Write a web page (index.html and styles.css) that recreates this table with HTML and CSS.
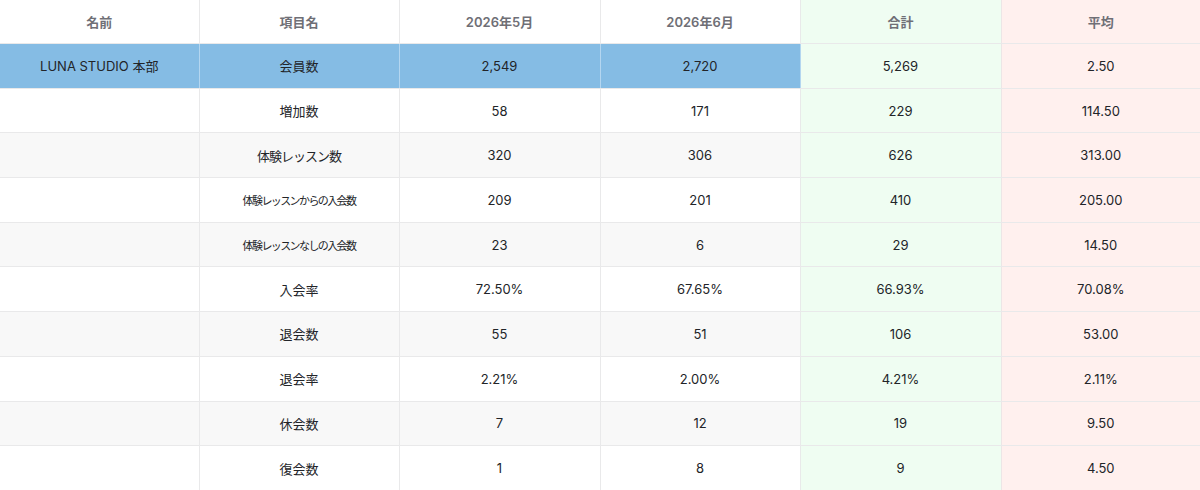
FILE: index.html
```html
<!DOCTYPE html>
<html lang="ja">
<head>
<meta charset="utf-8">
<link rel="stylesheet" href="styles.css">
</head>
<body>
<table class="report">
  <colgroup>
    <col class="c1"><col class="c2"><col class="c3"><col class="c4"><col class="c5"><col class="c6">
  </colgroup>
  <thead>
    <tr>
      <th>名前</th><th>項目名</th><th>2026年5月</th><th>2026年6月</th><th class="sum">合計</th><th class="avg">平均</th>
    </tr>
  </thead>
  <tbody>
    <tr class="hl"><td>LUNA STUDIO 本部</td><td>会員数</td><td>2,549</td><td>2,720</td><td class="sum">5,269</td><td class="avg">2.50</td></tr>
    <tr><td></td><td>増加数</td><td>58</td><td>171</td><td class="sum">229</td><td class="avg">114.50</td></tr>
    <tr class="odd"><td></td><td class="kata">体験レッスン数</td><td>320</td><td>306</td><td class="sum">626</td><td class="avg">313.00</td></tr>
    <tr><td></td><td class="small">体験レッスンからの入会数</td><td>209</td><td>201</td><td class="sum">410</td><td class="avg">205.00</td></tr>
    <tr class="odd"><td></td><td class="small">体験レッスンなしの入会数</td><td>23</td><td>6</td><td class="sum">29</td><td class="avg">14.50</td></tr>
    <tr><td></td><td>入会率</td><td>72.50%</td><td>67.65%</td><td class="sum">66.93%</td><td class="avg">70.08%</td></tr>
    <tr class="odd"><td></td><td>退会数</td><td>55</td><td>51</td><td class="sum">106</td><td class="avg">53.00</td></tr>
    <tr><td></td><td>退会率</td><td>2.21%</td><td>2.00%</td><td class="sum">4.21%</td><td class="avg">2.11%</td></tr>
    <tr class="odd"><td></td><td>休会数</td><td>7</td><td>12</td><td class="sum">19</td><td class="avg">9.50</td></tr>
    <tr><td></td><td>復会数</td><td>1</td><td>8</td><td class="sum">9</td><td class="avg">4.50</td></tr>
  </tbody>
</table>
</body>
</html>
```
FILE: styles.css
```css
html, body {
  margin: 0;
  padding: 0;
  background: #ffffff;
}
body {
  font-family: Inter, "Noto Sans CJK JP", sans-serif;
  color: #222428;
}
.report {
  width: 1200px;
  border-collapse: collapse;
  table-layout: fixed;
}
.report .c1 { width: 199px; }
.report .c2 { width: 200px; }
.report .c3 { width: 201px; }
.report .c4 { width: 200px; }
.report .c5 { width: 201px; }
.report .c6 { width: 199px; }
.report th,
.report td {
  border: 1px solid #e9e9ea;
  text-align: center;
  vertical-align: middle;
  padding: 0;
  font-size: 13px;
}
.report tr > :first-child {
  border-left: none;
}
.report tr > :last-child {
  border-right: none;
}
.report thead tr > * {
  border-top: none;
}
.report th {
  height: 43px;
  font-weight: 600;
  color: #6f6f76;
  background: #ffffff;
}
.report tbody tr {
  height: 44.7px;
}
.report tbody tr:last-child td {
  border-bottom: none;
}
.report tbody tr.odd td {
  background: #f8f8f8;
}
.report tbody tr.hl td {
  background: #85bce4;
  border-left-color: #b4d6f0;
  border-right-color: #b4d6f0;
}
.report .sum,
.report tbody tr.odd td.sum,
.report tbody tr.hl td.sum {
  background: #effdf2;
  border-left-color: #e4ece6;
  border-right-color: #ece6e6;
}
.report .avg,
.report tbody tr.odd td.avg,
.report tbody tr.hl td.avg {
  background: #fff0ee;
}
.report td.kata {
  letter-spacing: -1px;
}
.report td.small {
  font-size: 11px;
  font-family: "Noto Sans CJK JP", sans-serif;
  letter-spacing: -1.6px;
}
```
